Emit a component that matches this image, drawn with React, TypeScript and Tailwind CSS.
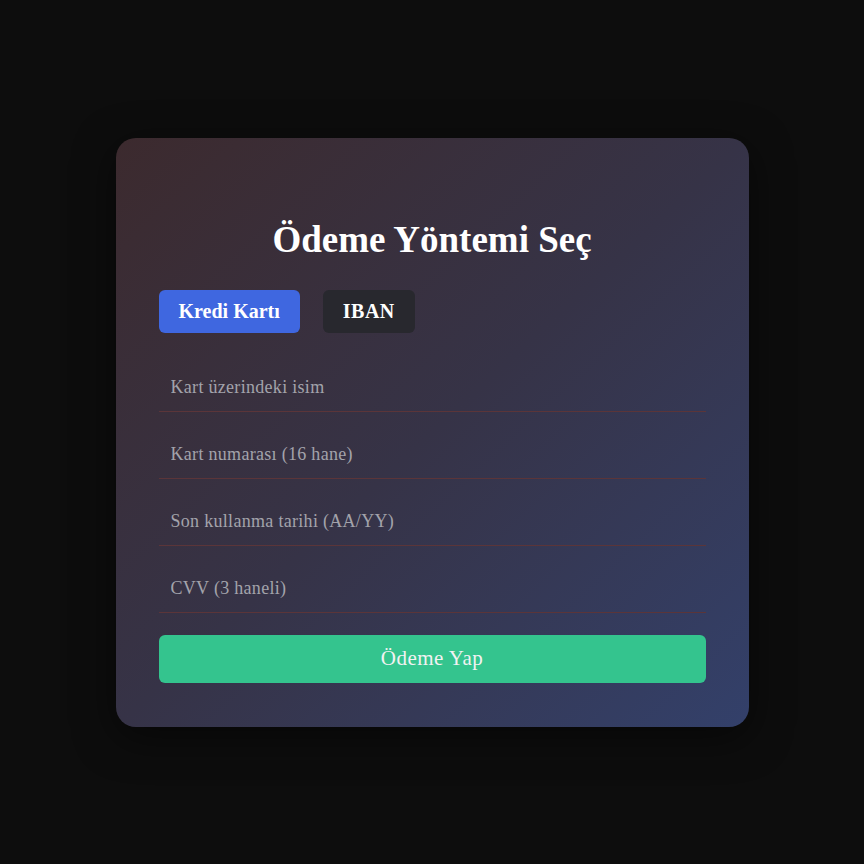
import { useState } from 'react'

const fields = [
  'Kart üzerindeki isim',
  'Kart numarası (16 hane)',
  'Son kullanma tarihi (AA/YY)',
  'CVV (3 haneli)',
]

export default function App() {
  const [method, setMethod] = useState<'card' | 'iban'>('card')

  return (
    <div className="min-h-screen bg-[#0d0d0d] flex items-center justify-center font-['Liberation_Serif','DejaVu_Serif',serif]">
      <div className="w-[633px] rounded-[20px] bg-linear-to-br from-[#3c2a2e] via-[#363347] to-[#33406a] px-[43px] pt-[81px] pb-[44px] shadow-[0_10px_40px_rgba(0,0,0,0.5)]">
        {/* Title */}
        <h1 className="text-center text-white font-bold text-[37px] leading-[42px]">Ödeme Yöntemi Seç</h1>

        {/* Method tabs */}
        <div className="flex gap-[23px] mt-[29px]">
          <button
            onClick={() => setMethod('card')}
            className={`h-[43px] px-5 rounded-[6px] text-white font-bold text-[20px] ${method === 'card' ? 'bg-[#3f67e0]' : 'bg-[#28282e]'}`}
          >
            Kredi Kartı
          </button>
          <button
            onClick={() => setMethod('iban')}
            className={`h-[43px] px-5 rounded-[6px] text-white font-bold text-[20px] tracking-[0.5px] ${method === 'iban' ? 'bg-[#3f67e0]' : 'bg-[#28282e]'}`}
          >
            IBAN
          </button>
        </div>

        {/* Inputs */}
        <div className="flex flex-col gap-[18px] mt-[30px]">
          {fields.map((f) => (
            <input
              key={f}
              placeholder={f}
              className="w-full bg-transparent px-3 py-3 text-[18px] tracking-[0.3px] leading-[24px] text-white placeholder:text-[#a3a3ab] border-b border-[#5b3539] outline-none"
            />
          ))}
        </div>

        <button className="w-full h-[48px] mt-[22px] rounded-[6px] bg-[#34c48e] text-[#f2f2f2] text-[21px] tracking-[0.5px]">
          Ödeme Yap
        </button>
      </div>
    </div>
  )
}
